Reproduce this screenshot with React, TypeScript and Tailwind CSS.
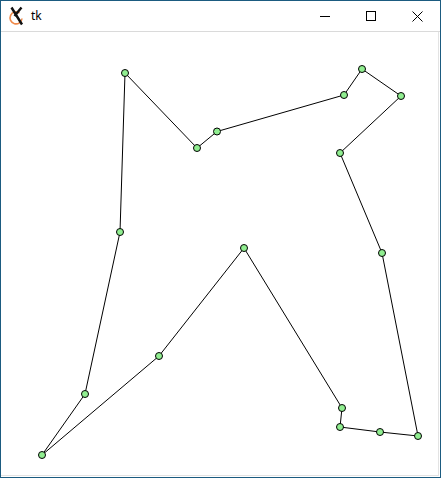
import React from "react";

const pts: [number, number][] = [
  [125, 73],
  [197, 148],
  [217, 131.5],
  [344, 95],
  [362, 69],
  [401, 96],
  [340, 153],
  [382, 253],
  [418, 436],
  [380, 432],
  [340, 427],
  [342, 408],
  [244, 248],
  [159, 356],
  [42, 455],
  [85, 394],
  [120, 232],
];

export default function App() {
  const poly = pts.map((p) => p.join(",")).join(" ");
  return (
    <div className="w-[441px] h-[478px] border border-[#1b5b80] bg-white flex flex-col overflow-hidden" style={{ fontFamily: '"Noto Sans", "Liberation Sans", sans-serif' }}>
      <div className="h-[30px] flex items-center shrink-0 bg-white">
        <div className="w-[29px] flex items-center justify-center pl-[2px]">
          <svg width="18" height="20" viewBox="0 0 18 20">
            <path d="M11.5 7 A6 6 0 1 0 14 12.5" fill="none" stroke="#f08a4b" strokeWidth="1.6" />
            <path d="M3.5 1.5 L14 18.5 M13.5 1.5 L6.5 10" stroke="#111" strokeWidth="2.4" fill="none" />
          </svg>
        </div>
        <span className="text-[12px] text-black leading-none ml-[1px]">tk</span>
        <div className="flex-1" />
        <div className="w-[46px] h-[30px] flex items-center justify-center">
          <div className="w-[10px] h-px bg-black" />
        </div>
        <div className="w-[46px] h-[30px] flex items-center justify-center">
          <div className="w-[10px] h-[10px] border border-black" />
        </div>
        <div className="w-[46px] h-[30px] flex items-center justify-center">
          <svg width="11" height="11" viewBox="0 0 11 11">
            <path d="M0.5 0.5 L10.5 10.5 M10.5 0.5 L0.5 10.5" stroke="#000" strokeWidth="1" />
          </svg>
        </div>
      </div>
      <div className="flex-1 border-t border-[#dadada] flex">
        <div className="flex-1 border-r border-b border-[#e3e3e3] mr-px mb-px">
          <svg width="437" height="443" viewBox="1 32 437 443" className="block">
            <polygon points={poly} fill="none" stroke="#000" strokeWidth="1" />
            {pts.map(([x, y], i) => (
              <circle key={i} cx={x} cy={y} r="3.5" fill="#90ee90" stroke="#000" strokeWidth="1" />
            ))}
          </svg>
        </div>
      </div>
    </div>
  );
}
